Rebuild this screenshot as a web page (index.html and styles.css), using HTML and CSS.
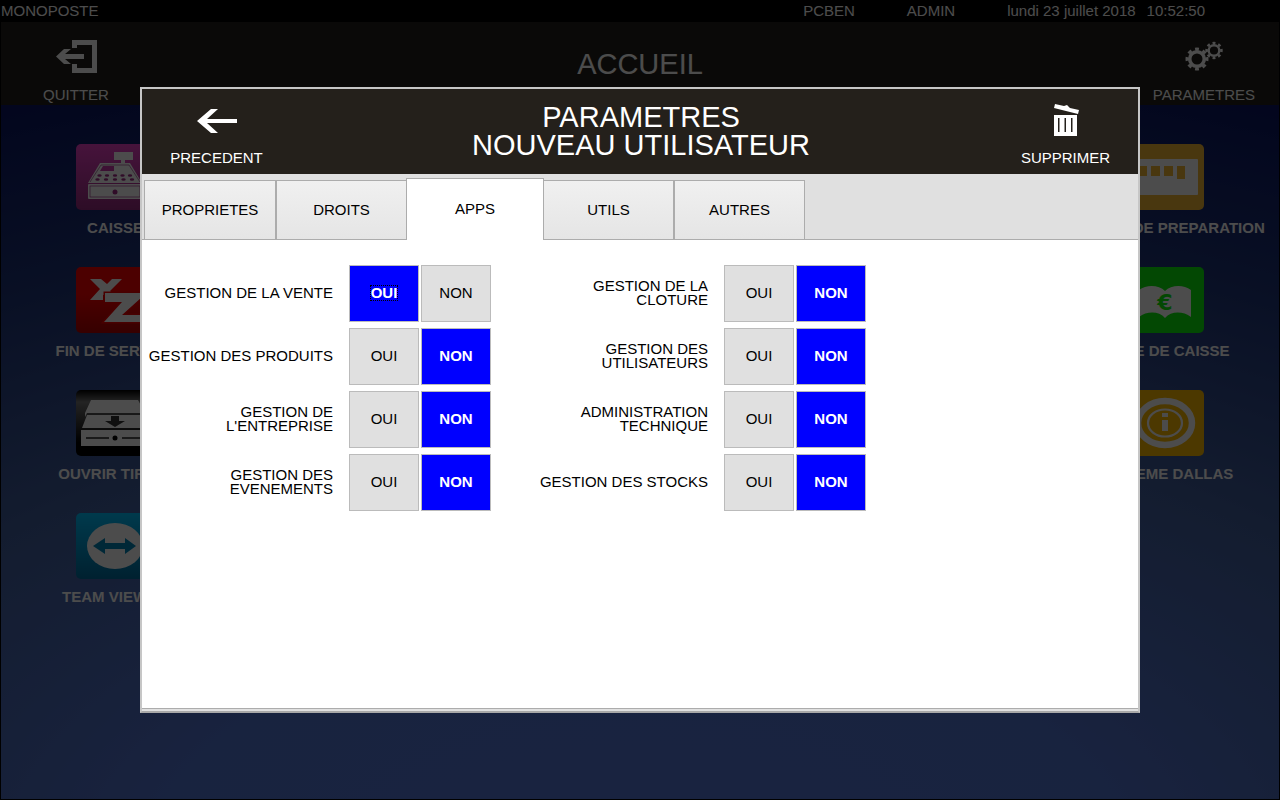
FILE: index.html
```
<!DOCTYPE html>
<html lang="fr">
<head>
    <meta charset="UTF-8">
    <meta name="viewport" content="width=device-width, initial-scale=1.0">
    <title>Paramètres utilisateur</title>
    <link rel="stylesheet" href="styles.css">
</head>
<body>
    <div class="status-bar">
        <span>MONOPOSTE</span>
        <div class="status-info">
            <span>PCBEN</span>
            <span>ADMIN</span>
            <div class="clock">
                <span>lundi 23 juillet 2018</span>
                <span>10:52:50</span>
            </div>
        </div>
    </div>

    <div class="home">
        <header class="header">
            <button type="button" class="header-btn">
                <svg width="42" height="40" viewBox="0 0 42 40" fill="currentColor">
                    <path d="M16 4h25v33H16v-9h5v4h15V9H21v3h-5z"/>
                    <path d="M0 20.500 8 13h7l-6 5h19v5H9l6 5H8z"/>
                </svg>
                QUITTER
            </button>
            <h1>ACCUEIL</h1>
            <button type="button" class="header-btn">
                <svg width="40" height="40" viewBox="0 0 40 40" fill="none" stroke="currentColor">
                    <circle cx="13" cy="23" r="7.300" stroke-width="3.600"/>
                    <circle cx="13" cy="23" r="10" stroke-width="3" pathLength="16" stroke-dasharray="1 1" stroke-dashoffset=".5"/>
                    <circle cx="30" cy="14.500" r="5.300" stroke-width="2.400"/>
                    <circle cx="30" cy="14.500" r="7.400" stroke-width="2.600" pathLength="16" stroke-dasharray="1 1" stroke-dashoffset=".5"/>
                </svg>
                PARAMETRES
            </button>
        </header>

        <main class="tiles">
            <div class="tile-column">
                <button type="button" class="tile">
                    <svg class="tile-icon purple" viewBox="0 0 78 66" fill="#fff">
                        <path d="M38 8h19v8h-8v3h-4v-3h-7z"/>
                        <path d="M24 19h30l12 20H12zM27 22l-3 5h14v-5z" fill-rule="evenodd"/>
                        <path d="M14 38l11-17h28l11 17" fill="none" stroke="#8f2d7b" stroke-width=".6"/>
                        <rect x="12" y="40" width="54" height="15" rx="1"/>
                        <rect x="14" y="42" width="50" height="11" fill="none" stroke="#a03588" stroke-width=".7"/>
                        <g fill="#a02b86">
                            <ellipse cx="23.500" cy="31.500" rx="2.200" ry="1.200"/><ellipse cx="31" cy="31.500" rx="2.200" ry="1.200"/><ellipse cx="39" cy="31.500" rx="2.200" ry="1.200"/><ellipse cx="46.500" cy="31.500" rx="2.200" ry="1.200"/><ellipse cx="54" cy="31.500" rx="2.200" ry="1.200"/>
                            <ellipse cx="21.500" cy="35.500" rx="2.200" ry="1.200"/><ellipse cx="30" cy="35.500" rx="2.200" ry="1.200"/><ellipse cx="39" cy="35.500" rx="2.200" ry="1.200"/><ellipse cx="47.500" cy="35.500" rx="2.200" ry="1.200"/><ellipse cx="56" cy="35.500" rx="2.200" ry="1.200"/>
                            <circle cx="39" cy="48" r="2.500"/>
                        </g>
                    </svg>
                    CAISSE
                </button>
                <button type="button" class="tile">
                    <svg class="tile-icon red" viewBox="0 0 78 66" fill="#fff">
                        <path d="M14 12h11l6 5 5-5h10L34 24l3 3-10 1v5H14l10-11z"/>
                        <path d="M29 26h37v4L46 48h20v7H28l18-20H29z" stroke="#f00000" stroke-width="3" paint-order="stroke"/>
                    </svg>
                    FIN DE SERVICE
                </button>
                <button type="button" class="tile">
                    <svg class="tile-icon black" viewBox="0 0 78 66" fill="#fff">
                        <path d="M15 10h47l7 13v4l-2-4H11l-2 4v-4z"/>
                        <path d="M11 25h56l5 13H6z"/>
                        <path d="M5 40h68v16H5z"/>
                        <path d="M35 26h8v5h6l-10 6-10-6h6z" fill="#333"/>
                        <path d="M10 48h23M46 48h22" stroke="#222" stroke-width="1.500"/>
                        <circle cx="39" cy="48" r="2.500" fill="#000"/>
                    </svg>
                    OUVRIR TIROIR
                </button>
                <button type="button" class="tile">
                    <svg class="tile-icon teal" viewBox="0 0 78 66" fill="#fff">
                        <ellipse cx="39" cy="33" rx="28" ry="23"/>
                        <path d="M17 33l12-8v5h20v-5l11 8-11 8v-5H29v5z" fill="#0087b9"/>
                    </svg>
                    TEAM VIEWER
                </button>
            </div>

            <div class="tile-column">
                <button type="button" class="tile">
                    <svg class="tile-icon ochre" viewBox="0 0 78 66" fill="#fff">
                        <rect x="6" y="15" width="66" height="36" rx="1"/>
                        <path d="M12 22h9v10h-9zM25 22h9v10h-9zM38 22h9v10h-9zM51 22h8v13h-8z" fill="#f5b932"/>
                    </svg>
                    ECRANS DE PREPARATION
                </button>
                <button type="button" class="tile">
                    <svg class="tile-icon green" viewBox="0 0 78 66" fill="#fff">
                        <path d="M39 24c6-6 18-7 26-1v27c-8-6-20-6-26 1-6-7-18-7-26-1V23c8-6 20-5 26 1z"/>
                        <text class="euro" x="39" y="43" text-anchor="middle">€</text>
                    </svg>
                    LIVRE DE CAISSE
                </button>
                <button type="button" class="tile">
                    <svg class="tile-icon gold" viewBox="0 0 78 66" fill="none" stroke="#fff">
                        <ellipse cx="39" cy="33" rx="27" ry="22" stroke-width="6.500"/>
                        <ellipse cx="39" cy="33" rx="17" ry="13.500" stroke-width="2.200"/>
                        <path d="M36 23h6v4h-6zM36 30h6v11h-6z" fill="#fff" stroke="none"/>
                    </svg>
                    SYSTEME DALLAS
                </button>
            </div>
        </main>
    </div>

    <div class="overlay">
        <section class="modal" role="dialog" aria-modal="true" aria-labelledby="modalTitle">
            <div class="modal-header">
                <button type="button" class="modal-btn">
                    <svg width="40" height="40" viewBox="0 0 40 40" fill="currentColor">
                        <path d="M0 20 14 8h7L10 18h30v4H10l11 10h-7z"/>
                    </svg>
                    PRECEDENT
                </button>
                <h2 id="modalTitle">PARAMETRES<br>NOUVEAU UTILISATEUR</h2>
                <button type="button" class="modal-btn">
                    <svg width="40" height="40" viewBox="0 0 40 40" fill="currentColor">
                        <path d="M10 3l9 2 3-1 3 3 9 2-1 4L9 7z"/>
                        <path d="M9 14h23v21H9zM13 17v14h1.500V17zM19.500 17v14H21V17zM26 17v14h1.500V17z" fill-rule="evenodd"/>
                    </svg>
                    SUPPRIMER
                </button>
            </div>

            <div class="tabs" role="tablist">
                <button type="button" class="tab" role="tab" aria-selected="false">PROPRIETES</button>
                <button type="button" class="tab" role="tab" aria-selected="false">DROITS</button>
                <button type="button" class="tab active" role="tab" aria-selected="true">APPS</button>
                <button type="button" class="tab" role="tab" aria-selected="false">UTILS</button>
                <button type="button" class="tab" role="tab" aria-selected="false">AUTRES</button>
            </div>

            <div class="panel" role="tabpanel">
                <div class="right-row" role="group" aria-labelledby="vente">
                    <span class="right-label" id="vente">GESTION DE LA VENTE</span>
                    <button type="button" class="choice selected" aria-pressed="true"><span class="focus-mark">OUI</span></button>
                    <button type="button" class="choice" aria-pressed="false">NON</button>
                </div>
                <div class="right-row" role="group" aria-labelledby="cloture">
                    <span class="right-label" id="cloture">GESTION DE LA CLOTURE</span>
                    <button type="button" class="choice" aria-pressed="false">OUI</button>
                    <button type="button" class="choice selected" aria-pressed="true">NON</button>
                </div>
                <div class="right-row" role="group" aria-labelledby="produits">
                    <span class="right-label" id="produits">GESTION DES PRODUITS</span>
                    <button type="button" class="choice" aria-pressed="false">OUI</button>
                    <button type="button" class="choice selected" aria-pressed="true">NON</button>
                </div>
                <div class="right-row" role="group" aria-labelledby="utilisateurs">
                    <span class="right-label" id="utilisateurs">GESTION DES UTILISATEURS</span>
                    <button type="button" class="choice" aria-pressed="false">OUI</button>
                    <button type="button" class="choice selected" aria-pressed="true">NON</button>
                </div>
                <div class="right-row" role="group" aria-labelledby="entreprise">
                    <span class="right-label" id="entreprise">GESTION DE L'ENTREPRISE</span>
                    <button type="button" class="choice" aria-pressed="false">OUI</button>
                    <button type="button" class="choice selected" aria-pressed="true">NON</button>
                </div>
                <div class="right-row" role="group" aria-labelledby="technique">
                    <span class="right-label" id="technique">ADMINISTRATION TECHNIQUE</span>
                    <button type="button" class="choice" aria-pressed="false">OUI</button>
                    <button type="button" class="choice selected" aria-pressed="true">NON</button>
                </div>
                <div class="right-row" role="group" aria-labelledby="evenements">
                    <span class="right-label" id="evenements">GESTION DES EVENEMENTS</span>
                    <button type="button" class="choice" aria-pressed="false">OUI</button>
                    <button type="button" class="choice selected" aria-pressed="true">NON</button>
                </div>
                <div class="right-row" role="group" aria-labelledby="stocks">
                    <span class="right-label" id="stocks">GESTION DES STOCKS</span>
                    <button type="button" class="choice" aria-pressed="false">OUI</button>
                    <button type="button" class="choice selected" aria-pressed="true">NON</button>
                </div>
            </div>
        </section>
    </div>
</body>
</html>
```
FILE: styles.css
```
:root {
    --bar: #24201b;
    --grey: #e0e0e0;
    --line: #acacac;
    --blue: #0000ff;
}

* {
    box-sizing: border-box;
}

body {
    margin: 0;
    min-height: 100vh;
    display: flex;
    flex-direction: column;
    background: #000;
    font-family: "Liberation Sans", Arial, sans-serif;
    font-size: 15px;
    color: #000;
}

button {
    font: inherit;
    color: inherit;
    padding: 0;
    border: none;
    background: none;
    cursor: pointer;
}

h1,
h2 {
    margin: 0;
    font-size: 29px;
    font-weight: normal;
    line-height: 28px;
    text-align: center;
}

/* Status bar */
.status-bar {
    display: flex;
    justify-content: space-between;
    padding: 0 75px 0 1px;
    line-height: 22px;
    color: #fff;
}

.status-info {
    display: flex;
    gap: 52px;
}

.clock {
    display: flex;
    gap: 11px;
}

/* Home screen */
.home {
    flex: 1;
    display: flex;
    flex-direction: column;
    margin: 0 1px 1px;
    color: #fff;
    background: radial-gradient(ellipse 130% 110% at 50% 110%, #5577d8 0%, #5375d3 30%, #42609f 55%, #1c3278 80%, #030a5c 105%);
}

.header {
    display: flex;
    justify-content: space-between;
    align-items: center;
    height: 83px;
    background: var(--bar);
}

.header-btn {
    display: flex;
    flex-direction: column;
    align-items: center;
    gap: 10px;
    width: 150px;
    padding-top: 12px;
    line-height: 18px;
}

.header-btn:first-child svg {
    margin-left: 2px;
}

.tiles {
    display: flex;
    justify-content: space-between;
    padding: 39px 9px;
}

.tile-column {
    display: flex;
    flex-direction: column;
    gap: 30px;
    width: 210px;
}

.tile {
    display: flex;
    flex-direction: column;
    align-items: center;
    gap: 9px;
    font-weight: bold;
    line-height: 18px;
    white-space: nowrap;
}

.tile-icon {
    width: 78px;
    height: 66px;
    border-radius: 5px;
}

.purple { background: linear-gradient(#ec42c8, #962b7f); }
.red { background: linear-gradient(#ff0000 40%, #b40000); }
.black { background: linear-gradient(#000, #777 18%, #000 80%); }
.teal { background: linear-gradient(#00c1ff, #006ea0); }
.ochre { background: #f5b932; }
.green { background: #0df00d; }
.gold { background: #ffbb00; }

.euro {
    font-family: "DejaVu Sans", sans-serif;
    font-size: 22px;
    font-weight: bold;
    fill: #0df00d;
}

/* Modal */
.overlay {
    position: fixed;
    inset: 0;
    display: flex;
    padding: 87px 140px;
    background: rgba(0, 0, 0, 0.7);
}

.modal {
    flex: 1;
    display: flex;
    flex-direction: column;
    border: 2px solid #c6c6c6;
    border-bottom-color: #a8a8a8;
    background: var(--grey);
}

.modal-header {
    display: flex;
    justify-content: space-between;
    align-items: center;
    height: 85px;
    padding: 0 0 2px 2px;
    background: var(--bar);
    color: #fff;
}

.modal-btn {
    display: flex;
    flex-direction: column;
    align-items: center;
    gap: 8px;
    width: 145px;
    padding-top: 6px;
    line-height: 18px;
}

/* Tabs */
.tabs {
    display: flex;
    align-items: flex-end;
    height: 66px;
    padding-left: 2px;
    border-bottom: 1px solid var(--line);
}

.tab {
    width: 131px;
    height: 59px;
    padding-bottom: 2px;
    border: 1px solid var(--line);
    border-bottom: none;
    background: linear-gradient(#f0f0f0, #e5e5e5);
}

.tab:first-child {
    width: 132px;
}

.tab.active {
    width: 138px;
    height: 62px;
    margin: 0 -1px -1px;
    padding-bottom: 3px;
    background: #fff;
    z-index: 1;
}

/* User rights */
.panel {
    flex: 1;
    display: grid;
    grid-template-columns: 349px 375px;
    align-content: start;
    row-gap: 6px;
    margin-bottom: 2px;
    padding-top: 25px;
    border-bottom: 1px solid var(--line);
    background: #fff;
}

.right-row {
    display: flex;
    justify-content: flex-end;
    align-items: center;
    gap: 2px;
}

.right-label {
    width: 186px;
    margin-right: 14px;
    padding-bottom: 2px;
    line-height: 14px;
    text-align: right;
}

.choice {
    width: 70px;
    height: 57px;
    padding-bottom: 2px;
    border: 1px solid #bbb;
    background: var(--grey);
}

.choice.selected {
    background: var(--blue);
    color: #fff;
    font-weight: bold;
}

.focus-mark {
    display: inline-block;
    line-height: 14px;
    outline: 1px dotted #000;
}
```
